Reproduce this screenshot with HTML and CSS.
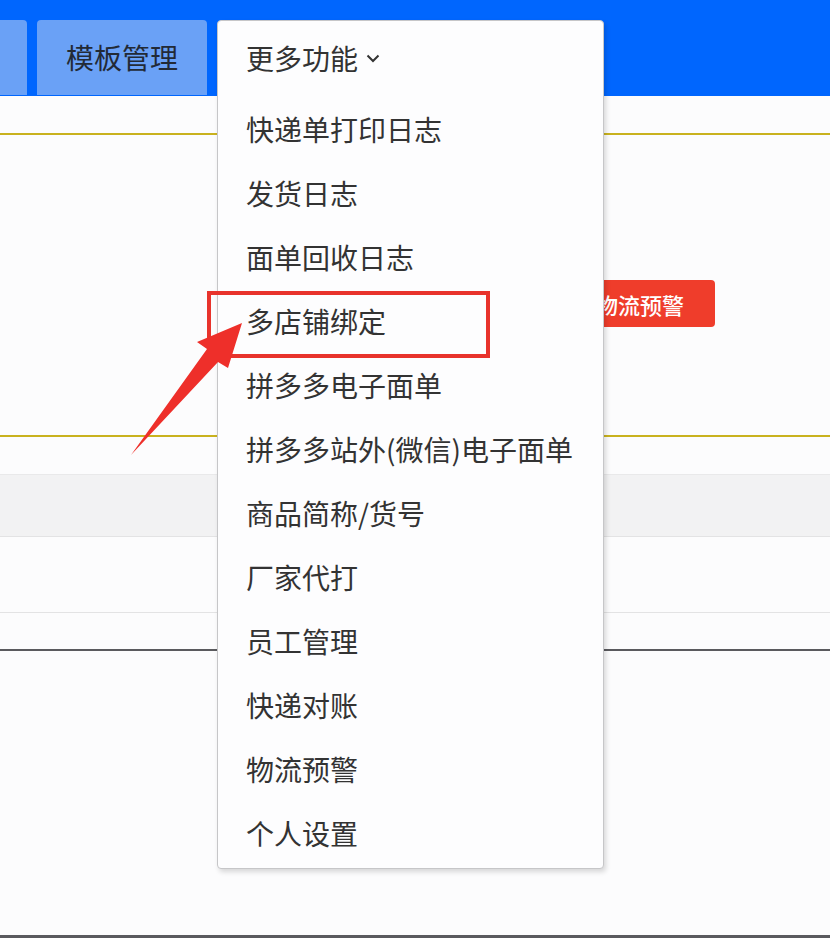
FILE: index.html
```html
<!DOCTYPE html>
<html lang="zh-CN">
<head>
<meta charset="utf-8">
<title>更多功能</title>
<link rel="stylesheet" href="styles.css">
</head>
<body>
<div class="page">
  <header class="topbar">
    <div class="tab tab-cut"></div>
    <div class="tab">模板管理</div>
  </header>
  <section class="panel">
    <button class="btn-warn">物流预警</button>
  </section>
  <div class="table">
    <div class="thead"></div>
    <div class="row row-tall"></div>
    <div class="row row-short"></div>
  </div>
  <div class="spacer"></div>
</div>

<div class="dropdown">
  <div class="dd-head">更多功能<svg class="chev" width="14" height="10" viewBox="0 0 14 10"><path d="M1.5 2.5 L7 8 L12.5 2.5" fill="none" stroke="#333" stroke-width="2"/></svg></div>
  <ul class="dd-list">
    <li>快递单打印日志</li>
    <li>发货日志</li>
    <li>面单回收日志</li>
    <li>多店铺绑定</li>
    <li>拼多多电子面单</li>
    <li>拼多多站外(微信)电子面单</li>
    <li>商品简称/货号</li>
    <li>厂家代打</li>
    <li>员工管理</li>
    <li>快递对账</li>
    <li>物流预警</li>
    <li>个人设置</li>
  </ul>
</div>

<div class="highlight"></div>
<svg class="arrow" width="830" height="938" viewBox="0 0 830 938">
  <polygon points="242,323 228,368 218,362 131,455 207,349 197,342" fill="#ee2f2a"/>
</svg>
</body>
</html>
```

FILE: styles.css
```css
* { box-sizing: border-box; }
html, body { margin: 0; padding: 0; }
body {
  width: 830px;
  height: 938px;
  overflow: hidden;
  background: #fcfcfd;
  font-family: "Noto Sans CJK SC", "Noto Sans", sans-serif;
  position: relative;
}
.page { display: flex; flex-direction: column; }
.topbar {
  height: 96px;
  background: #0066fe;
  display: flex;
  align-items: flex-end;
  gap: 10px;
  padding-top: 20px;
}
.tab {
  height: 75px;
  width: 170px;
  background: #6aa1f6;
  border-radius: 4px 4px 0 0;
  display: flex;
  align-items: center;
  justify-content: center;
  font-size: 28px;
  color: #222a36;
  margin-bottom: 1px;
  padding-bottom: 2px;
}
.tab-cut { width: 27px; border-radius: 0 4px 0 0; }
.panel {
  margin-top: 37px;
  height: 304px;
  border-top: 2px solid #c9b21e;
  border-bottom: 2px solid #c9b21e;
  display: flex;
  justify-content: flex-end;
  align-items: flex-start;
  padding: 145px 115px 0 0;
}
.btn-warn {
  width: 150px;
  height: 47px;
  border: none;
  border-radius: 4px;
  background: #ef3d2b;
  color: #fff;
  font-family: "Noto Sans CJK SC", sans-serif;
  font-size: 22px;
  font-weight: 500;
  padding: 0;
}
.table { margin-top: 37px; }
.thead {
  height: 63px;
  background: #f2f2f3;
  border-top: 1px solid #e9e9ea;
  border-bottom: 1px solid #e3e3e4;
}
.row-tall { height: 76px; border-bottom: 1px solid #e3e3e4; }
.row-short { height: 38px; border-bottom: 2px solid #5a5a5e; }
.spacer { height: 287px; border-bottom: 3px solid #5a5a5e; }

.dropdown {
  position: absolute;
  left: 217px;
  top: 20px;
  width: 387px;
  height: 849px;
  background: #fdfdfe;
  border: 1px solid #c6c6c8;
  border-radius: 4px;
  box-shadow: 2px 3px 5px rgba(0,0,0,0.15);
  color: #333;
  font-size: 28px;
}
.dd-head {
  height: 78px;
  display: flex;
  align-items: center;
  padding-left: 28px;
  padding-bottom: 4px;
  gap: 8px;
}
.chev { margin-top: 0; }
.dd-list { list-style: none; margin: 0; padding: 0; }
.dd-list li {
  height: 64px;
  line-height: 60px;
  padding-left: 28px;
  white-space: nowrap;
}
.highlight {
  position: absolute;
  left: 207px;
  top: 291px;
  width: 283px;
  height: 67px;
  border: 4px solid #e8332c;
}
.arrow { position: absolute; left: 0; top: 0; pointer-events: none; }
```
